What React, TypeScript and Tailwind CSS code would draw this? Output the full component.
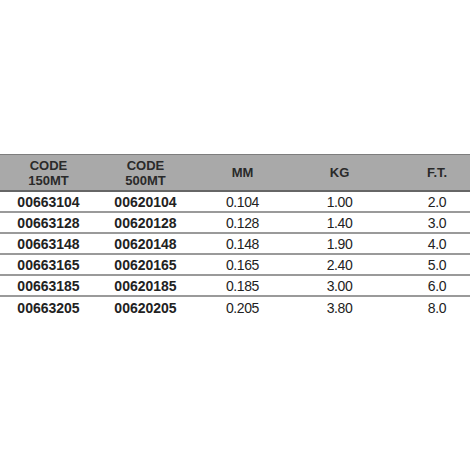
const rows = [
  ['00663104', '00620104', '0.104', '1.00', '2.0'],
  ['00663128', '00620128', '0.128', '1.40', '3.0'],
  ['00663148', '00620148', '0.148', '1.90', '4.0'],
  ['00663165', '00620165', '0.165', '2.40', '5.0'],
  ['00663185', '00620185', '0.185', '3.00', '6.0'],
  ['00663205', '00620205', '0.205', '3.80', '8.0'],
];

const grid = 'grid grid-cols-[97px_97px_97px_97px_1fr] items-center';

export default function App() {
  return (
    <div className="h-[470px] w-[470px] overflow-hidden bg-white pt-[154px] font-['Liberation_Sans',Arial,sans-serif] text-[#222]">
      <div className={`${grid} h-[38px] border-t border-b-2 border-t-[#7d7d7d] border-b-[#666] bg-[#a9a9a9] text-[13px] font-bold leading-[15px] text-[#2a2a2a]`}>
        <div className="text-center">
          CODE
          <br />
          150MT
        </div>
        <div className="text-center">
          CODE
          <br />
          500MT
        </div>
        <div className="text-center">MM</div>
        <div className="text-center">KG</div>
        <div className="pl-[16px] text-center">F.T.</div>
      </div>
      {rows.map((r, i) => (
        <div
          key={r[0]}
          className={`${grid} h-[21px] text-[14px] leading-none ${i < rows.length - 1 ? 'border-b-2 border-[#9a9a9a]' : ''}`}
        >
          <div className="text-center font-bold">{r[0]}</div>
          <div className="text-center font-bold">{r[1]}</div>
          <div className="text-center tracking-[-0.4px]">{r[2]}</div>
          <div className="text-center tracking-[-0.4px]">{r[3]}</div>
          <div className="pl-[16px] text-center tracking-[-0.4px]">{r[4]}</div>
        </div>
      ))}
    </div>
  );
}
